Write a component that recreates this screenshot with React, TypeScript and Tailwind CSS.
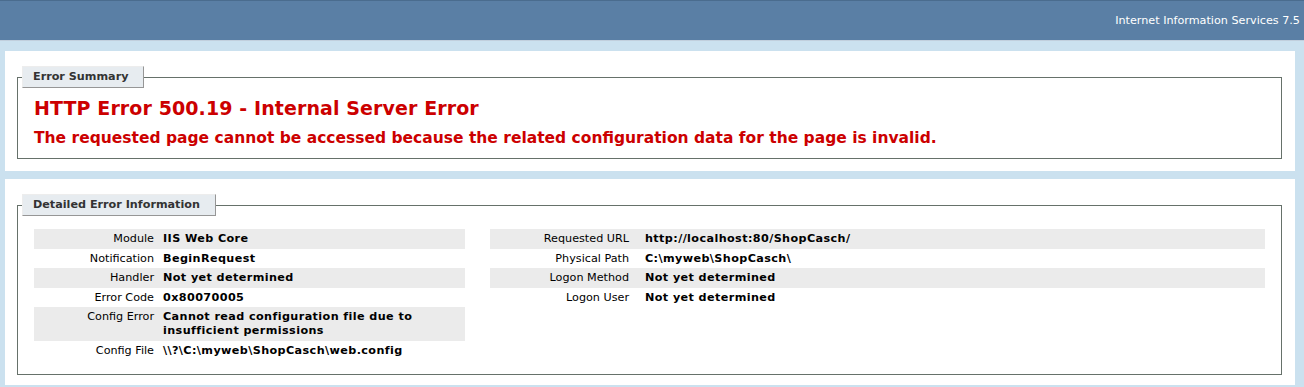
// IIS 7.5 - page d'erreur détaillée
import React from "react";

const font = "font-['DejaVu_Sans',Verdana,sans-serif]";

const leftRows: [string, string, boolean][] = [
  ["Module", "IIS Web Core", true],
  ["Notification", "BeginRequest", false],
  ["Handler", "Not yet determined", true],
  ["Error Code", "0x80070005", false],
  ["Config Error", "Cannot read configuration file due to insufficient permissions", true],
  ["Config File", "\\\\?\\C:\\myweb\\ShopCasch\\web.config", false],
];

const rightRows: [string, string, boolean][] = [
  ["Requested URL", "http://localhost:80/ShopCasch/", true],
  ["Physical Path", "C:\\myweb\\ShopCasch\\", false],
  ["Logon Method", "Not yet determined", true],
  ["Logon User", "Not yet determined", false],
];

function Legend({ children }: { children: React.ReactNode }) {
  return (
    <legend className="ml-[-12px] pl-[10px] pr-[15px] py-[3px] leading-[14px] font-bold text-[#333333] bg-[#E7ECF0] border border-t-[#EDEDED] border-l-[#EDEDED] border-r-[#969696] border-b-[#969696]">
      {children}
    </legend>
  );
}

function DetailsTable({ rows, labelW, labelPr }: { rows: [string, string, boolean][]; labelW: string; labelPr: string }) {
  return (
    <div className="mt-[6px] mb-[4px] flex flex-col">
      {rows.map(([label, value, alt]) => (
        <div key={label} className={`flex py-[3px] leading-[13.6px] ${alt ? "bg-[#ebebeb]" : ""}`}>
          <div className={`${labelW} ${labelPr} shrink-0 text-right`}>{label}</div>
          <div className="font-bold tracking-[0.4px]">{value}</div>
        </div>
      ))}
    </div>
  );
}

export default function App() {
  return (
    <div className={`${font} text-[11.2px] text-black bg-[#CBE1EF] min-h-[387px] pb-[3px]`}>
      {/* bandeau du haut */}
      <div className="h-[41px] bg-[#5A7FA5] border-t border-t-[#4A6C8E] border-b border-b-[#C1CFDD] pt-[13px] pr-[4px] text-right text-white leading-[14px]">
        Internet Information Services 7.5
      </div>

      {/* résumé de l'erreur */}
      <div className="ml-[5px] w-[1290px] mt-[10px] bg-white pt-[15px] pl-[12px] pr-[13px] pb-[12px]">
        <fieldset className="border border-[#66716a] px-[16px] pt-[9px] pb-[10px]">
          <Legend>Error Summary</Legend>
          <h2 className="text-[19px] leading-[23px] font-bold tracking-[0.1px] text-[#CC0000]">
            HTTP Error 500.19 - Internal Server Error
          </h2>
          <h3 className="mt-[9px] text-[15.5px] leading-[19px] font-bold text-[#CC0000]">
            The requested page cannot be accessed because the related configuration data for the page is invalid.
          </h3>
        </fieldset>
      </div>

      {/* infos détaillées */}
      <div className="ml-[5px] w-[1290px] mt-[8px] bg-white pt-[15px] pl-[12px] pr-[13px] pb-[10px]">
        <fieldset className="border border-[#66716a] px-[16px] pt-[7px] pb-[10px]">
          <Legend>Detailed Error Information</Legend>
          <div className="flex">
            <div className="w-[431px] mr-[25px]">
              <DetailsTable rows={leftRows} labelW="w-[129px]" labelPr="pr-[9px]" />
            </div>
            <div className="w-[775px]">
              <DetailsTable rows={rightRows} labelW="w-[155px]" labelPr="pr-[16px]" />
            </div>
          </div>
        </fieldset>
      </div>
    </div>
  );
}
